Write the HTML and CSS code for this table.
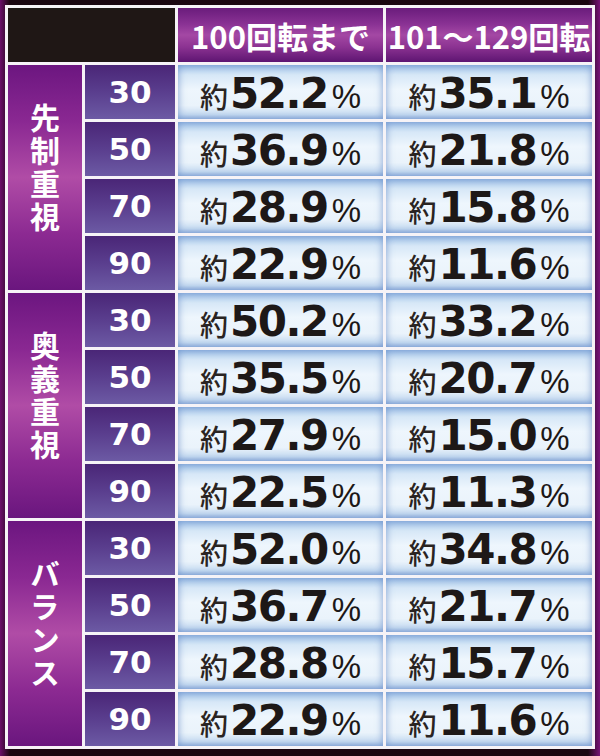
FILE: index.html
```html
<!DOCTYPE html>
<html lang="ja">
<head>
<meta charset="utf-8">
<link rel="stylesheet" href="styles.css">
</head>
<body>
<div class="table">
  <div class="corner"></div>
  <div class="head">100回転まで</div>
  <div class="head">101〜129回転</div>

  <div class="group"><span>先制重視</span></div>
  <div class="num">30</div><div class="val"><span class="y">約</span><span class="n">52.2</span><span class="p">%</span></div><div class="val"><span class="y">約</span><span class="n">35.1</span><span class="p">%</span></div>
  <div class="num">50</div><div class="val"><span class="y">約</span><span class="n">36.9</span><span class="p">%</span></div><div class="val"><span class="y">約</span><span class="n">21.8</span><span class="p">%</span></div>
  <div class="num">70</div><div class="val"><span class="y">約</span><span class="n">28.9</span><span class="p">%</span></div><div class="val"><span class="y">約</span><span class="n">15.8</span><span class="p">%</span></div>
  <div class="num">90</div><div class="val"><span class="y">約</span><span class="n">22.9</span><span class="p">%</span></div><div class="val"><span class="y">約</span><span class="n">11.6</span><span class="p">%</span></div>

  <div class="group"><span>奥義重視</span></div>
  <div class="num">30</div><div class="val"><span class="y">約</span><span class="n">50.2</span><span class="p">%</span></div><div class="val"><span class="y">約</span><span class="n">33.2</span><span class="p">%</span></div>
  <div class="num">50</div><div class="val"><span class="y">約</span><span class="n">35.5</span><span class="p">%</span></div><div class="val"><span class="y">約</span><span class="n">20.7</span><span class="p">%</span></div>
  <div class="num">70</div><div class="val"><span class="y">約</span><span class="n">27.9</span><span class="p">%</span></div><div class="val"><span class="y">約</span><span class="n">15.0</span><span class="p">%</span></div>
  <div class="num">90</div><div class="val"><span class="y">約</span><span class="n">22.5</span><span class="p">%</span></div><div class="val"><span class="y">約</span><span class="n">11.3</span><span class="p">%</span></div>

  <div class="group"><span>バランス</span></div>
  <div class="num">30</div><div class="val"><span class="y">約</span><span class="n">52.0</span><span class="p">%</span></div><div class="val"><span class="y">約</span><span class="n">34.8</span><span class="p">%</span></div>
  <div class="num">50</div><div class="val"><span class="y">約</span><span class="n">36.7</span><span class="p">%</span></div><div class="val"><span class="y">約</span><span class="n">21.7</span><span class="p">%</span></div>
  <div class="num">70</div><div class="val"><span class="y">約</span><span class="n">28.8</span><span class="p">%</span></div><div class="val"><span class="y">約</span><span class="n">15.7</span><span class="p">%</span></div>
  <div class="num">90</div><div class="val"><span class="y">約</span><span class="n">22.9</span><span class="p">%</span></div><div class="val"><span class="y">約</span><span class="n">11.6</span><span class="p">%</span></div>
</div>
</body>
</html>
```
FILE: styles.css
```css
html, body {
  margin: 0;
  padding: 0;
}
body {
  width: 600px;
  height: 756px;
  overflow: hidden;
  background:
    linear-gradient(to right, rgba(120,16,120,0.85) 0px, rgba(40,6,30,0) 10px, rgba(40,6,30,0) 588px, rgba(130,20,130,0.9) 600px),
    linear-gradient(#1a0610, #2a0a24 50%, #1a0610);
  font-family: "Noto Sans CJK JP", sans-serif;
}
.table {
  margin: 5px 0 0 5px;
  display: grid;
  grid-template-columns: 74px 90px 205px 206px;
  grid-template-rows: repeat(13, 54px);
  gap: 3px;
  padding: 3px;
  width: 584px;
  background: #f6f3f7;
}
.corner {
  grid-column: span 2;
  background: #1f1715;
}
.head {
  display: flex;
  align-items: center;
  justify-content: center;
  color: #fff;
  font-family: "Noto Sans CJK JP", sans-serif;
  font-weight: 700;
  font-size: 31px;
  letter-spacing: 0;
  padding-top: 1px;
  background: linear-gradient(#6a1c7c 0%, #8a3294 30%, #a448a4 50%, #8c3392 72%, #5e1572 100%);
}
.group {
  grid-row: span 4;
  display: flex;
  align-items: center;
  justify-content: center;
  padding-bottom: 18px;
  background: linear-gradient(#6c1680 0%, #8a2892 25%, #b04ca6 50%, #8c2a92 75%, #6a167e 100%);
}
.group span {
  writing-mode: vertical-rl;
  color: #fff;
  font-family: "Noto Sans CJK JP", sans-serif;
  font-weight: 700;
  font-size: 30px;
  letter-spacing: 3px;
  line-height: 1;
}
.num {
  display: flex;
  align-items: center;
  justify-content: center;
  color: #fff;
  font-family: "DejaVu Sans", sans-serif;
  font-weight: 700;
  font-size: 31px;
  letter-spacing: 0;
  background: linear-gradient(#4a2677 0%, #5a3e8e 50%, #6c5aa4 100%);
}
.val {
  display: flex;
  align-items: baseline;
  justify-content: center;
  align-content: center;
  flex-wrap: wrap;
  padding-top: 3px;
  line-height: 1;
  color: #1d1817;
  background: linear-gradient(#a6c6ea 0%, #d6e7f7 18%, #eef6fd 45%, #eaf3fb 75%, #c9ddf2 92%, #a9c3e6 100%);
  box-shadow: inset 0 0 7px 1px rgba(80,120,190,0.55);
}
.y {
  font-family: "Noto Sans CJK JP", sans-serif;
  font-weight: 500;
  font-size: 28px;
  margin-right: 2px;
  color: #2a2422;
}
.n {
  font-family: "DejaVu Sans", sans-serif;
  font-weight: 700;
  font-size: 42px;
  letter-spacing: -1.5px;
  margin-right: 4px;
}
.p {
  font-family: "Liberation Sans", sans-serif;
  font-weight: 400;
  font-size: 33px;
}
```
